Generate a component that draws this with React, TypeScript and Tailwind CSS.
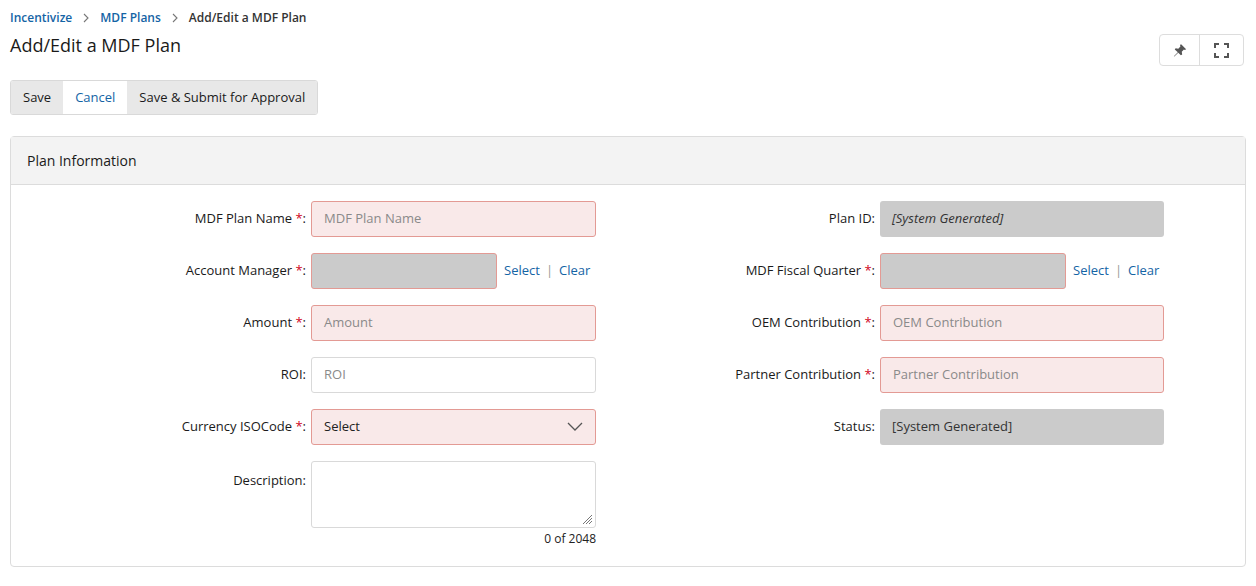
import React from "react";

const F = { fontFamily: '"Open Sans", "Liberation Sans", sans-serif' };

function Label({ text, req, w }: { text: string; req?: boolean; w: string }) {
  return (
    <div className={`${w} shrink-0 pr-[5px] text-right text-[13px] text-[#1a1a1a]`}>
      {text}
      {req && <span className="text-[#d0021b]">*</span>}:
    </div>
  );
}

function Input({ ph, kind }: { ph?: string; kind: "req" | "plain" | "gray" | "grayReq" }) {
  const cls =
    kind === "req"
      ? "bg-[#f9e9e9] border-[#e39a94]"
      : kind === "plain"
      ? "bg-white border-[#d9d9d9]"
      : kind === "grayReq"
      ? "bg-[#cbcbcb] border-[#e39a94]"
      : "bg-[#cbcbcb] border-[#cbcbcb]";
  return (
    <div className={`h-[36px] rounded-[3px] border ${cls} flex items-center px-3 text-[13px] text-[#8a8a8a]`}>{ph}</div>
  );
}

function Links() {
  return (
    <div className="flex items-center text-[13px] text-[#1464a5] ml-[7px]">
      <span>Select</span>
      <span className="mx-[6px] text-[#999]">|</span>
      <span>Clear</span>
    </div>
  );
}

export default function App() {
  return (
    <div style={F} className="w-[1256px] h-[586px] bg-white px-[10px] relative">
      <div className="pt-[9px] flex items-center text-[12px] font-semibold">
        <span className="text-[#1464a5]">Incentivize</span>
        <span className="mx-[10px] text-[#777]">
          <svg width="8" height="10" viewBox="0 0 8 10"><path d="M2 1l4 4-4 4" stroke="#777" fill="none" strokeWidth="1.1" /></svg>
        </span>
        <span className="text-[#1464a5]">MDF Plans</span>
        <span className="mx-[10px]">
          <svg width="8" height="10" viewBox="0 0 8 10"><path d="M2 1l4 4-4 4" stroke="#777" fill="none" strokeWidth="1.1" /></svg>
        </span>
        <span className="text-[#333]">Add/Edit a MDF Plan</span>
      </div>
      <div className="flex justify-between items-start">
        <h1 className="text-[18px] text-[#1a1a1a] mt-[6px] leading-[24px]">Add/Edit a MDF Plan</h1>
        <div className="mt-[7px] mr-[2px] flex h-[32px] border border-[#ddd] rounded-[4px]">
          <div className="w-[40px] flex items-center justify-center border-r border-[#ddd]">
            <svg width="14" height="14" viewBox="0 0 16 16"><path d="M9 1l6 6-1.5 1-1-.5-2.5 2.5.5 3L9 14 6 11l-4.5 4.5L1 15l4.5-4.5L2 7.5 3 6l3 .5L8.5 4 8 3z" fill="#555" /></svg>
          </div>
          <div className="w-[43px] flex items-center justify-center">
            <svg width="15" height="15" viewBox="0 0 15 15" fill="none" stroke="#555" strokeWidth="2"><path d="M1 5V1h4M10 1h4v4M14 10v4h-4M5 14H1v-4" /></svg>
          </div>
        </div>
      </div>
      <div className="mt-[14px] inline-flex h-[35px] border border-[#d9d9d9] rounded-[3px] text-[13px] overflow-hidden">
        <div className="px-[12px] flex items-center bg-[#e8e8e8] text-[#1a1a1a]">Save</div>
        <div className="px-[12px] flex items-center bg-white text-[#1464a5]">Cancel</div>
        <div className="px-[12px] flex items-center bg-[#e8e8e8] text-[#1a1a1a]">Save &amp; Submit for Approval</div>
      </div>
      <div className="mt-[21px] border border-[#dcdcdc] rounded-[4px] h-[431px]">
        <div className="h-[48px] bg-[#f3f3f3] border-b border-[#dcdcdc] flex items-center px-[16px] text-[14px] text-[#1a1a1a]">Plan Information</div>
        <div className="flex pt-[16px]">
          <div className="w-[585px] flex flex-col gap-[16px]">
            <div className="flex items-center"><Label w="w-[300px]" text="MDF Plan Name " req /><div className="w-[285px]"><Input kind="req" ph="MDF Plan Name" /></div></div>
            <div className="flex items-center"><Label w="w-[300px]" text="Account Manager " req /><div className="w-[186px]"><Input kind="grayReq" /></div><Links /></div>
            <div className="flex items-center"><Label w="w-[300px]" text="Amount " req /><div className="w-[285px]"><Input kind="req" ph="Amount" /></div></div>
            <div className="flex items-center"><Label w="w-[300px]" text="ROI" /><div className="w-[285px]"><Input kind="plain" ph="ROI" /></div></div>
            <div className="flex items-center"><Label w="w-[300px]" text="Currency ISOCode " req />
              <div className="w-[285px] h-[36px] rounded-[3px] border bg-[#f9e9e9] border-[#e39a94] flex items-center justify-between px-3 text-[13px] text-[#222]">
                Select
                <svg width="16" height="10" viewBox="0 0 16 10"><path d="M1 1l7 7 7-7" stroke="#555" fill="none" strokeWidth="1.3" /></svg>
              </div>
            </div>
            <div className="flex items-start"><div className="pt-[10px]"><Label w="w-[300px]" text="Description" /></div>
              <div className="w-[285px]">
                <div className="h-[67px] rounded-[3px] border border-[#d9d9d9] relative">
                  <svg className="absolute right-[2px] bottom-[2px]" width="12" height="12" viewBox="0 0 12 12" stroke="#777" strokeWidth="1"><path d="M11 2L2 11M11 5L5 11M11 8L8 11" /></svg>
                </div>
                <div className="text-right text-[12px] text-[#222] mt-[2px]">0 of 2048</div>
              </div>
            </div>
          </div>
          <div className="flex flex-col gap-[16px]">
            <div className="flex items-center"><Label w="w-[284px]" text="Plan ID" /><div className="w-[284px] h-[36px] rounded-[3px] bg-[#cbcbcb] flex items-center px-3 text-[13px] italic text-[#333]">[System Generated]</div></div>
            <div className="flex items-center"><Label w="w-[284px]" text="MDF Fiscal Quarter " req /><div className="w-[186px]"><Input kind="grayReq" /></div><Links /></div>
            <div className="flex items-center"><Label w="w-[284px]" text="OEM Contribution " req /><div className="w-[284px]"><Input kind="req" ph="OEM Contribution" /></div></div>
            <div className="flex items-center"><Label w="w-[284px]" text="Partner Contribution " req /><div className="w-[284px]"><Input kind="req" ph="Partner Contribution" /></div></div>
            <div className="flex items-center"><Label w="w-[284px]" text="Status" /><div className="w-[284px] h-[36px] rounded-[3px] bg-[#cbcbcb] flex items-center px-3 text-[13px] text-[#333]">[System Generated]</div></div>
          </div>
        </div>
      </div>
    </div>
  );
}
